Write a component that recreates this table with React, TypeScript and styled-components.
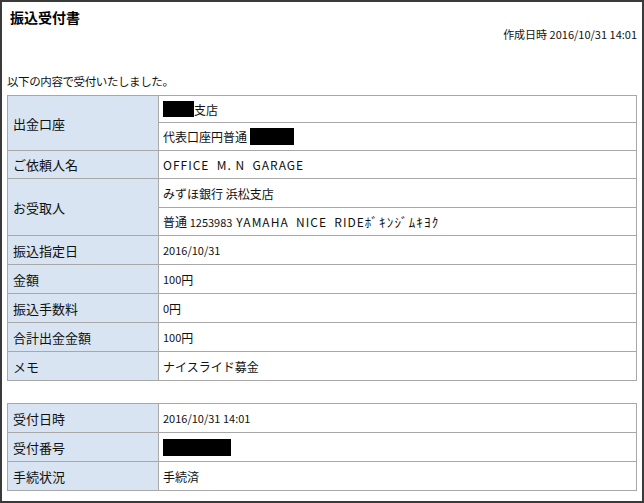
import React from "react";
import styled, { createGlobalStyle } from "styled-components";

const GlobalStyle = createGlobalStyle`
  html, body { margin: 0; padding: 0; background: #ffffff; }
  body {
    font-family: "Noto Sans CJK JP", "Noto Sans", sans-serif;
    color: #111111;
  }
`;

const Frame = styled.div`
  width: 644px;
  height: 503px;
  box-sizing: border-box;
  border: 2px solid #3a3a3a;
  padding: 0 5px;
  background: #ffffff;
  display: flex;
  flex-direction: column;
`;

const Title = styled.h1`
  margin: 0 0 0 3px;
  padding-top: 6px;
  font-size: 14px;
  line-height: 18px;
  font-weight: bold;
  color: #000000;
`;

const CreatedAt = styled.div`
  text-align: right;
  font-size: 11px;
  line-height: 16px;
  color: #111111;
`;

const Intro = styled.p`
  margin: 31px 0 6px 0;
  font-size: 11.5px;
  line-height: 16px;
  letter-spacing: -0.4px;
`;

const Sheet = styled.div<{ $rows: string; $gap?: number }>`
  display: grid;
  grid-template-columns: 151px 1fr;
  grid-template-rows: ${(p) => p.$rows};
  border-top: 1px solid #a8a8a8;
  border-left: 1px solid #a8a8a8;
  margin-top: ${(p) => p.$gap ?? 0}px;
`;

const Label = styled.div<{ $span?: number }>`
  grid-row: span ${(p) => p.$span ?? 1};
  box-sizing: border-box;
  display: flex;
  align-items: center;
  padding-left: 5px;
  background: #d8e4f2;
  border-right: 1px solid #a8a8a8;
  border-bottom: 1px solid #a8a8a8;
  font-size: 13px;
  color: #111111;
`;

const Value = styled.div`
  box-sizing: border-box;
  display: flex;
  align-items: center;
  padding-left: 4px;
  border-right: 1px solid #a8a8a8;
  border-bottom: 1px solid #a8a8a8;
  font-size: 12px;
  color: #111111;
  white-space: pre;
`;

const Num = styled.span`
  font-size: 11px;
  letter-spacing: 0;
`;

const Spaced = styled.span`
  letter-spacing: 1px;
  white-space: pre;
`;

const HalfKana = styled.span`
  font-size: 13px;
  letter-spacing: 1.2px;
`;

const Redacted = styled.span<{ $w: number; $h: number }>`
  display: inline-block;
  width: ${(p) => p.$w}px;
  height: ${(p) => p.$h}px;
  background: #000000;
`;

export default function App() {
  return (
    <>
      <GlobalStyle />
      <Frame>
        <Title>振込受付書</Title>
        <CreatedAt>
          作成日時 <Num>2016/10/31 14:01</Num>
        </CreatedAt>
        <Intro>以下の内容で受付いたしました。</Intro>

        <Sheet $rows="27px 28px 28px 29px 28px 29px 29px 29px 29px 29px">
          <Label $span={2}>出金口座</Label>
          <Value>
            <Redacted $w={31} $h={16} />
            支店
          </Value>
          <Value>
            代表口座円普通 <Redacted $w={44} $h={17} />
          </Value>
          <Label>ご依頼人名</Label>
          <Value>
            <Spaced>OFFICE  M. N  GARAGE</Spaced>
          </Value>
          <Label $span={2}>お受取人</Label>
          <Value>みずほ銀行 浜松支店</Value>
          <Value>
            普通 <Num>1253983</Num>
            <Spaced> YAMAHA  NICE  RIDE</Spaced>
            <HalfKana>ﾎﾞｷﾝｼﾞﾑｷﾖｸ</HalfKana>
          </Value>
          <Label>振込指定日</Label>
          <Value>
            <Num>2016/10/31</Num>
          </Value>
          <Label>金額</Label>
          <Value>
            <Num>100</Num>円
          </Value>
          <Label>振込手数料</Label>
          <Value>
            <Num>0</Num>円
          </Value>
          <Label>合計出金金額</Label>
          <Value>
            <Num>100</Num>円
          </Value>
          <Label>メモ</Label>
          <Value>ナイスライド募金</Value>
        </Sheet>

        <Sheet $rows="29px 29px 29px" $gap={22}>
          <Label>受付日時</Label>
          <Value>
            <Num>2016/10/31 14:01</Num>
          </Value>
          <Label>受付番号</Label>
          <Value>
            <Redacted $w={68} $h={17} />
          </Value>
          <Label>手続状況</Label>
          <Value>手続済</Value>
        </Sheet>
      </Frame>
    </>
  );
}
